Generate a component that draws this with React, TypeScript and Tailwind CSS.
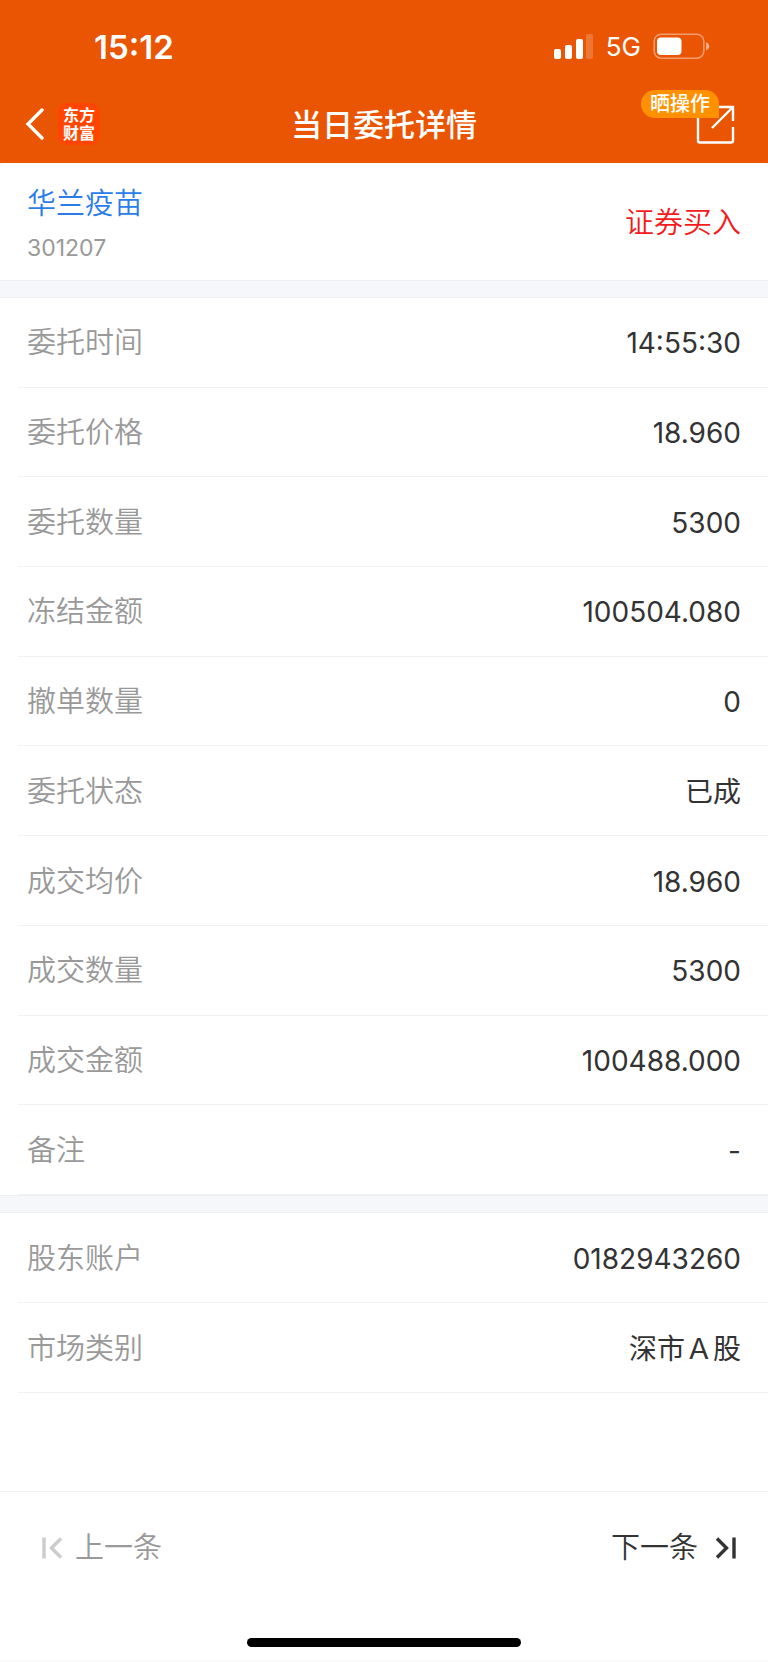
import type { ReactNode } from "react";

type DetailItem = {
  label: string;
  value: string;
};

const orderItems: DetailItem[] = [
  { label: "委托时间", value: "14:55:30" },
  { label: "委托价格", value: "18.960" },
  { label: "委托数量", value: "5300" },
  { label: "冻结金额", value: "100504.080" },
  { label: "撤单数量", value: "0" },
  { label: "委托状态", value: "已成" },
  { label: "成交均价", value: "18.960" },
  { label: "成交数量", value: "5300" },
  { label: "成交金额", value: "100488.000" },
  { label: "备注", value: "-" },
];

const accountItems: DetailItem[] = [
  { label: "股东账户", value: "0182943260" },
  { label: "市场类别", value: "深市Ａ股" },
];

const StatusBar = () => (
  <div className="flex h-[84px] items-center justify-between pt-[10px] pr-[57px] pl-[94px]">
    <span className="text-[33px] leading-10 font-semibold">15:12</span>
    <div className="flex items-center">
      <svg width="40" height="26" viewBox="0 0 40 26" fill="currentColor">
        <rect x="0" y="15" width="7" height="10" rx="2" />
        <rect x="11" y="11" width="7" height="14" rx="2" />
        <rect x="22" y="5" width="7" height="20" rx="2" />
        <rect x="32" y="0" width="7" height="25" rx="2" opacity="0.2" />
      </svg>
      <span className="ml-3 text-[26px] leading-8">5G</span>
      <svg className="ml-3" width="58" height="28" viewBox="0 0 58 28" fill="none">
        <rect x="1.2" y="1.2" width="49.6" height="24" rx="7" stroke="white" strokeWidth="1.6" opacity="0.42" />
        <rect x="4" y="4.5" width="24.5" height="17.5" rx="4" fill="white" />
        <path d="M53 9.3c2 .6 3.3 2.1 3.3 4s-1.3 3.4-3.3 4z" fill="white" opacity="0.5" />
      </svg>
    </div>
  </div>
);

const NavBar = () => (
  <div className="relative flex h-[79px] items-center justify-between pr-[33px] pl-[25px]">
    <div className="flex items-center gap-[13px]">
      <button type="button" aria-label="返回">
        <svg width="20" height="32" viewBox="0 0 20 32" fill="none" stroke="currentColor" strokeWidth="3.4" strokeLinecap="round">
          <path d="M17 2 3 16l14 14" />
        </svg>
      </button>
      <div className="flex size-[42px] flex-col items-center justify-center rounded-[9px] bg-[#ff4500] text-[16px] leading-[18px] font-bold">
        <span>东方</span>
        <span>财富</span>
      </div>
    </div>
    <h1 className="absolute left-1/2 -translate-x-1/2 pt-[2px] text-[31px] leading-10 font-medium whitespace-nowrap">
      当日委托详情
    </h1>
    <button type="button" aria-label="分享" className="relative">
      <svg width="39" height="41" viewBox="0 0 39 41" fill="none" stroke="currentColor" strokeWidth="2.4">
        <path d="M23 4h14v14M37 4 16 25" />
        <path d="M2 12v25.5a2 2 0 0 0 2 2h31a2 2 0 0 0 2-2V24" />
      </svg>
      <span className="absolute right-4 bottom-[26px] rounded-[14px] rounded-br-none bg-[#ff9100] px-[9px] text-[20px] leading-7 font-medium whitespace-nowrap">
        晒操作
      </span>
    </button>
  </div>
);

const DetailRow = ({ label, value }: DetailItem) => (
  <div className="ml-[18px] flex items-center justify-between border-b border-[#f2f2f2] pt-[2px] pr-[27px] pl-[9px]">
    <dt className="font-[350] text-[#999]">{label}</dt>
    <dd className="text-[28px] text-[#333]">{value}</dd>
  </div>
);

const Divider = () => <div className="h-[18px] border-y border-[#eeeff0] bg-[#f6f7fa]" />;

const FooterButton = ({ children, className }: { children: ReactNode; className: string }) => (
  <button type="button" className={`flex items-center font-[350] ${className}`}>
    {children}
  </button>
);

export default function App() {
  return (
    <div className="flex min-h-screen flex-col bg-[#f7f7f7] font-['Inter','Noto_Sans_CJK_SC',sans-serif] text-[29px] leading-10">
      <header className="bg-[#ea5504] text-white">
        <StatusBar />
        <NavBar />
      </header>

      <main className="flex flex-1 flex-col rounded-t-md bg-white">
        <section className="flex h-[117px] items-center justify-between px-[27px] pt-[2px]">
          <div>
            <h2>
              <a href="#stock" className="font-[350] text-[#2a7de9]">
                华兰疫苗
              </a>
            </h2>
            <p className="mt-[10px] text-[23px] leading-7 text-[#999]">301207</p>
          </div>
          <span className="font-[350] text-[#f51b1b]">证券买入</span>
        </section>

        <Divider />
        <dl className="grid min-h-[897px] auto-rows-fr">
          {orderItems.map((item) => (
            <DetailRow key={item.label} {...item} />
          ))}
        </dl>

        <Divider />
        <dl className="grid min-h-[180px] auto-rows-fr">
          {accountItems.map((item) => (
            <DetailRow key={item.label} {...item} />
          ))}
        </dl>
      </main>

      <footer className="border-t border-[#f3f3f3] bg-white">
        <nav className="flex h-[110px] items-center justify-between pt-[2px] pr-8 pl-[42px]">
          <FooterButton className="gap-[13px] text-[#999]">
            <svg width="20" height="22" viewBox="0 0 20 22" fill="none" stroke="#ccc" strokeWidth="3.4">
              <path d="M2 0.5v21M19 1.5 9.5 11l9.5 9.5" />
            </svg>
            上一条
          </FooterButton>
          <FooterButton className="gap-[18px] text-[#333]">
            下一条
            <svg width="20" height="22" viewBox="0 0 20 22" fill="none" stroke="currentColor" strokeWidth="3.4">
              <path d="M18 0.5v21M1 1.5 10.5 11 1 20.5" />
            </svg>
          </FooterButton>
        </nav>
        <div className="flex h-[60px] justify-center border-b-2 border-[#fafafa] pt-9">
          <div className="h-[9px] w-[274px] rounded-full bg-black" />
        </div>
      </footer>
    </div>
  );
}
